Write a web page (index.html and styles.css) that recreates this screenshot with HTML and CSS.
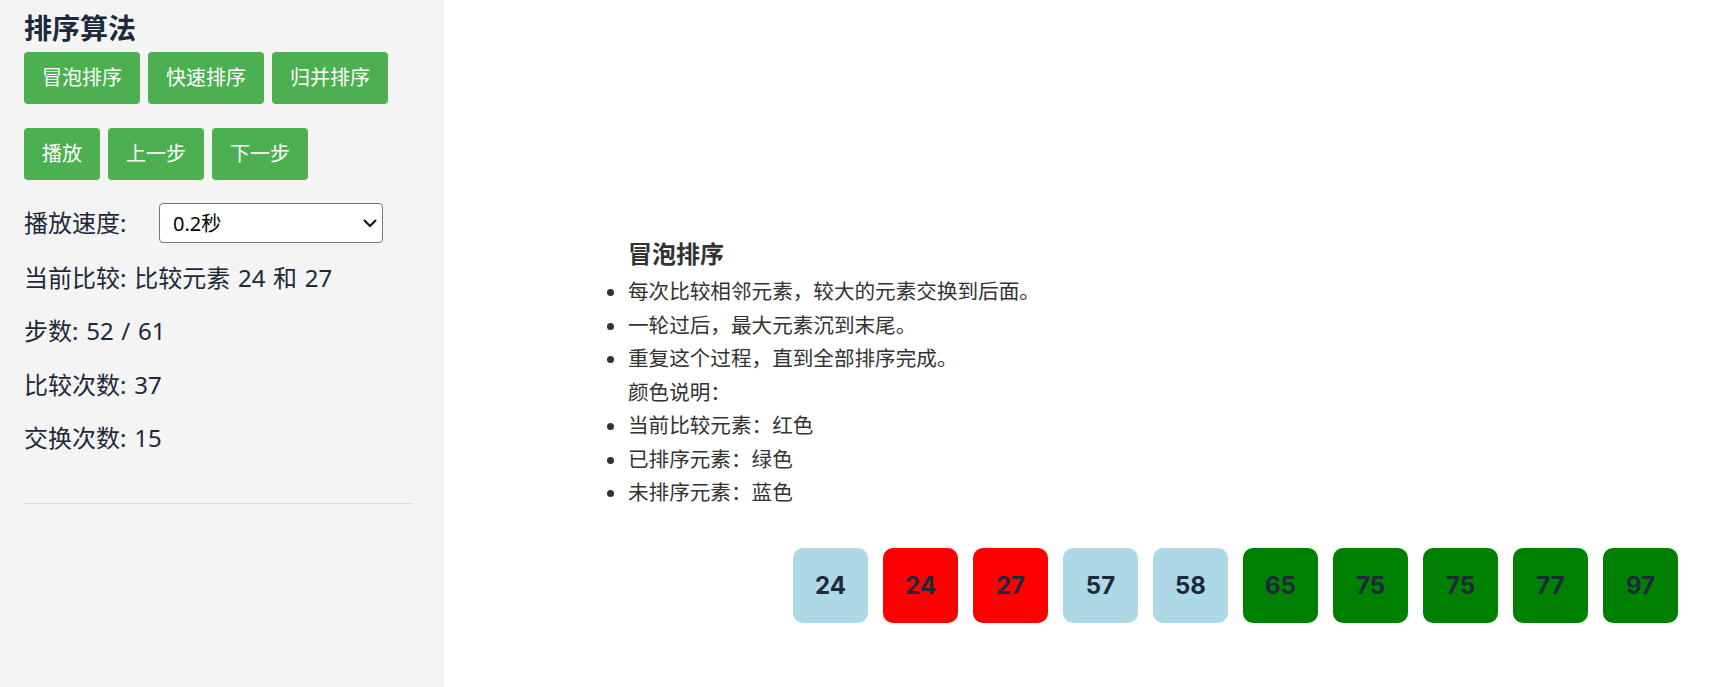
FILE: index.html
```html
<!DOCTYPE html>
<html lang="zh-CN">
<head>
<meta charset="utf-8">
<title>排序算法</title>
<link rel="stylesheet" href="styles.css">
</head>
<body>
<div class="app">
  <aside class="sidebar">
    <h2 class="title">排序算法</h2>
    <div class="btn-row algos">
      <button class="btn">冒泡排序</button>
      <button class="btn">快速排序</button>
      <button class="btn">归并排序</button>
    </div>
    <div class="btn-row controls">
      <button class="btn">播放</button>
      <button class="btn">上一步</button>
      <button class="btn">下一步</button>
    </div>
    <div class="speed">
      <label class="speed-label">播放速度:</label>
      <div class="select-wrap">
        <select class="select">
          <option>0.2秒</option>
          <option>0.5秒</option>
          <option>1秒</option>
        </select>
        <svg class="chevron" width="14" height="9" viewBox="0 0 14 9"><path d="M1.5 1.5 L7 7 L12.5 1.5" fill="none" stroke="#111" stroke-width="2" stroke-linecap="round" stroke-linejoin="round"/></svg>
      </div>
    </div>
    <div class="stats">
      <p>当前比较: 比较元素 24 和 27</p>
      <p>步数: 52 / 61</p>
      <p>比较次数: 37</p>
      <p>交换次数: 15</p>
    </div>
    <hr class="divider">
  </aside>
  <main class="main">
    <section class="info">
      <h3 class="info-title">冒泡排序</h3>
      <ul class="info-list">
        <li>每次比较相邻元素，较大的元素交换到后面。</li>
        <li>一轮过后，最大元素沉到末尾。</li>
        <li>重复这个过程，直到全部排序完成。</li>
        <li class="plain">颜色说明：</li>
        <li>当前比较元素：红色</li>
        <li>已排序元素：绿色</li>
        <li>未排序元素：蓝色</li>
      </ul>
    </section>
    <div class="array">
      <div class="box unsorted">24</div>
      <div class="box compare">24</div>
      <div class="box compare">27</div>
      <div class="box unsorted">57</div>
      <div class="box unsorted">58</div>
      <div class="box sorted">65</div>
      <div class="box sorted">75</div>
      <div class="box sorted">75</div>
      <div class="box sorted">77</div>
      <div class="box sorted">97</div>
    </div>
  </main>
</div>
</body>
</html>
```
FILE: styles.css
```css
html, body {
  margin: 0;
  padding: 0;
}

body {
  font-family: "Noto Sans", "Noto Sans CJK SC", sans-serif;
  color: #1e293b;
  background: #ffffff;
}

.app {
  display: flex;
  height: 100vh;
}

.sidebar {
  flex: 0 0 444px;
  box-sizing: border-box;
  background: #f4f4f4;
  padding: 12px 31px 0 24px;
}

.title {
  margin: 0;
  font-size: 28px;
  line-height: 32px;
  font-weight: 700;
  color: #1e293b;
}

.btn-row {
  display: flex;
  gap: 8px;
}

.algos {
  margin-top: 8px;
}

.controls {
  margin-top: 24px;
}

.btn {
  height: 52px;
  padding: 0 18px;
  font-family: inherit;
  font-size: 20px;
  line-height: 1;
  color: #ffffff;
  background: #4caf50;
  border: none;
  border-radius: 4px;
}

.speed {
  margin-top: 23px;
  display: flex;
  align-items: center;
  height: 40px;
}

.speed-label {
  flex: 0 0 135px;
  font-size: 24px;
  line-height: 32px;
  color: #1e293b;
}

.select-wrap {
  position: relative;
  width: 224px;
  height: 40px;
}

.select {
  -webkit-appearance: none;
  appearance: none;
  box-sizing: border-box;
  width: 100%;
  height: 100%;
  border: 1px solid #767676;
  border-radius: 4px;
  background: #ffffff;
  font-family: inherit;
  font-size: 20px;
  color: #000000;
  padding: 0 13px;
}

.chevron {
  position: absolute;
  right: 6px;
  top: 16px;
  pointer-events: none;
}

.stats {
  margin-top: 19px;
  display: flex;
  flex-direction: column;
  gap: 21.33px;
}

.stats p {
  margin: 0;
  font-size: 24px;
  line-height: 32px;
  word-spacing: 1.5px;
}

.divider {
  margin: 49px 0 0;
  border: none;
  border-top: 1px solid #dddddd;
  height: 0;
}

.main {
  flex: 1;
  display: flex;
  flex-direction: column;
  padding-top: 238px;
}

.info {
  margin-left: 144px;
  color: #333333;
}

.info-title {
  margin: 0;
  padding-left: 40px;
  font-size: 24px;
  line-height: 32px;
  font-weight: 700;
  color: #333333;
}

.info-list {
  margin: 5px 0 0;
  padding-left: 40px;
  font-size: 20.6px;
  line-height: 33.5px;
}

.info-list .plain {
  list-style: none;
}

.array {
  margin-top: 38.5px;
  display: flex;
  justify-content: flex-end;
  gap: 15px;
  padding-right: 45px;
}

.box {
  width: 75px;
  height: 75px;
  border-radius: 10px;
  display: flex;
  align-items: center;
  justify-content: center;
  font-family: Inter, "Noto Sans", sans-serif;
  font-size: 24px;
  font-weight: 700;
  color: #1e293b;
}

.unsorted {
  background: #add8e6;
}

.compare {
  background: #ff0000;
}

.sorted {
  background: #008000;
}
```
